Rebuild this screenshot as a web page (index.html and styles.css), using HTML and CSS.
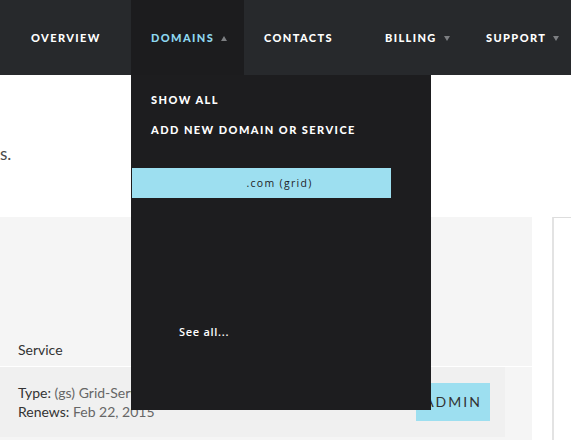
FILE: index.html
```html
<!DOCTYPE html>
<html>
<head>
<meta charset="utf-8">
<link rel="stylesheet" href="styles.css">
</head>
<body>
<header class="nav">
  <div class="nav-item w-overview">OVERVIEW</div>
  <div class="nav-item w-domains active">DOMAINS <span class="caret up"></span>
    <div class="dropdown">
      <div class="dd-link first">SHOW ALL</div>
      <div class="dd-link">ADD NEW DOMAIN OR SERVICE</div>
      <div class="dd-hl">.com (grid)</div>
      <div class="dd-see">See all...</div>
    </div>
  </div>
  <div class="nav-item w-contacts">CONTACTS</div>
  <div class="nav-item w-billing">BILLING <span class="caret down"></span></div>
  <div class="nav-item w-support">SUPPORT <span class="caret down"></span></div>
</header>
<main class="main">
  <p class="intro">s.</p>
  <div class="content">
    <section class="panel">
      <div class="thead">Service</div>
      <div class="trow">
        <div class="info">
          <div><span class="lbl">Type:</span> (gs) Grid-Service</div>
          <div><span class="lbl">Renews:</span> Feb 22, 2015</div>
        </div>
        <div class="btn">ADMIN</div>
      </div>
    </section>
    <aside class="card"></aside>
  </div>
</main>
</body>
</html>
```

FILE: styles.css
```css
html, body {
  margin: 0;
  padding: 0;
  background: #ffffff;
  overflow: hidden;
  height: 440px;
}
body {
  font-family: Lato, "Open Sans", sans-serif;
  position: relative;
}
.nav {
  display: flex;
  height: 75px;
  background: #27292c;
  padding-left: 11px;
  position: relative;
  z-index: 5;
}
.nav-item {
  box-sizing: border-box;
  padding-left: 20px;
  height: 75px;
  line-height: 76px;
  color: #ffffff;
  font-weight: 900;
  font-size: 11px;
  letter-spacing: 1.4px;
  white-space: nowrap;
  position: relative;
}
.w-overview { width: 120px; }
.w-domains { width: 113px; }
.w-contacts { width: 121px; }
.w-billing { width: 101px; }
.w-support { width: 105px; }
.nav-item.active {
  background: #1c1c1e;
  color: #8ed7ef;
  height: 76px;
}
.caret {
  display: inline-block;
  width: 0;
  height: 0;
  border-left: 3px solid transparent;
  border-right: 3px solid transparent;
  margin-left: 3px;
  vertical-align: middle;
  position: relative;
  top: -1px;
}
.caret.up { border-bottom: 5px solid #7d7f82; }
.caret.down { border-top: 5px solid #7d7f82; }
.dropdown {
  position: absolute;
  left: 0;
  top: 75px;
  width: 300px;
  height: 335px;
  background: #1d1d1f;
  line-height: normal;
  color: #ffffff;
  padding-top: 17px;
  box-sizing: border-box;
}
.dd-link {
  padding-left: 20px;
  font-size: 11px;
  font-weight: 900;
  letter-spacing: 1.45px;
  height: 30px;
  line-height: 15px;
}
.dd-hl {
  margin: 16px 0 0 1px;
  width: 259px;
  height: 30px;
  line-height: 30px;
  background: #9ddff0;
  color: #1d1d1f;
  text-align: center;
  padding-left: 36px;
  box-sizing: border-box;
  font-family: "Open Sans", sans-serif;
  font-size: 10.5px;
  font-weight: 400;
  letter-spacing: 1.3px;
}
.dd-see {
  margin: 126px 0 0 48px;
  font-family: "Open Sans", sans-serif;
  font-size: 11px;
  font-weight: 600;
  letter-spacing: 0.7px;
}
.main {
  position: relative;
}
.intro {
  margin: 0;
  padding-top: 68px;
  height: 74px;
  font-family: Lato, sans-serif;
  font-size: 17px;
  color: #4a4a4a;
}
.content {
  display: flex;
  height: 223px;
}
.panel {
  width: 532px;
  background: #f5f5f5;
  padding-top: 117px;
  box-sizing: border-box;
}
.thead {
  height: 32px;
  line-height: 32px;
  padding-left: 18px;
  font-size: 14px;
  color: #333333;
  border-bottom: 1px solid #ffffff;
}
.trow {
  width: 505px;
  background: #f0f0f0;
  display: flex;
  align-items: center;
  justify-content: space-between;
  padding: 16px 15px 16px 18px;
  box-sizing: border-box;
}
.info {
  font-size: 14px;
  line-height: 19px;
  color: #666666;
}
.lbl { color: #333333; }
.btn {
  width: 74px;
  height: 38px;
  line-height: 38px;
  background: #9ddff0;
  color: #333333;
  text-align: center;
  font-size: 14px;
  letter-spacing: 2px;
}
.card {
  margin-left: 20px;
  flex: 1;
  border-top: 1px solid #dddddd;
  border-left: 2px solid #e3e3e3;
  background: #ffffff;
}
```
